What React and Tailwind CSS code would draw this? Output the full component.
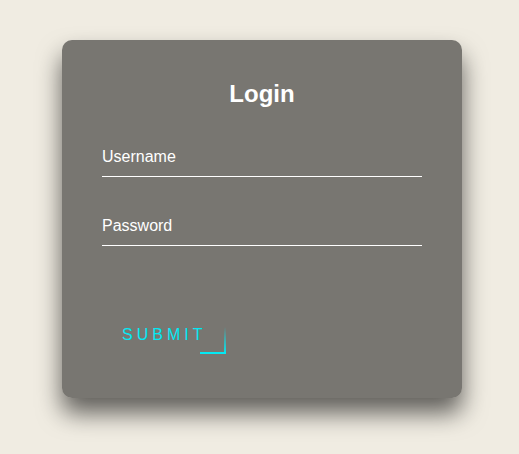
export default function App() {
  return (
    <div className="min-h-screen w-full bg-[#f0ece2] pt-[40px] pl-[62px] font-['Liberation_Sans',Arial,sans-serif]">
      <div className="w-[400px] rounded-[10px] bg-[rgba(0,0,0,0.5)] p-[40px] shadow-[0_15px_25px_rgba(0,0,0,0.6)]">
        <h2 className="mb-[30px] text-center text-[24px] font-bold leading-[28px] text-white">Login</h2>
        <form onSubmit={(e) => e.preventDefault()}>
          <div className="relative">
            <input
              type="text"
              className="mb-[30px] block w-full border-0 border-b border-white bg-transparent py-[10px] text-[16px] leading-[18px] text-white outline-none"
            />
            <label className="pointer-events-none absolute left-0 top-0 py-[10px] text-[16px] leading-[18px] text-white">
              Username
            </label>
          </div>
          <div className="relative">
            <input
              type="password"
              className="block w-full border-0 border-b border-white bg-transparent py-[10px] text-[16px] leading-[18px] text-white outline-none"
            />
            <label className="pointer-events-none absolute left-0 top-0 py-[10px] text-[16px] leading-[18px] text-white">
              Password
            </label>
          </div>
          <a
            href="#"
            className="relative mt-[70px] mb-[4px] block w-fit overflow-hidden px-[20px] py-[10px] text-[16px] uppercase leading-[18px] tracking-[4px] text-[#03e9f4] no-underline"
          >
            {/* bottom line */}
            <span className="absolute bottom-0 right-0 h-[2px] w-[26px] bg-[#03e9f4]" />
            {/* right line, fades in going down */}
            <span className="absolute bottom-0 right-0 h-[27px] w-[2px] bg-gradient-to-b from-transparent to-[#03e9f4]" />
            Submit
          </a>
        </form>
      </div>
    </div>
  );
}
